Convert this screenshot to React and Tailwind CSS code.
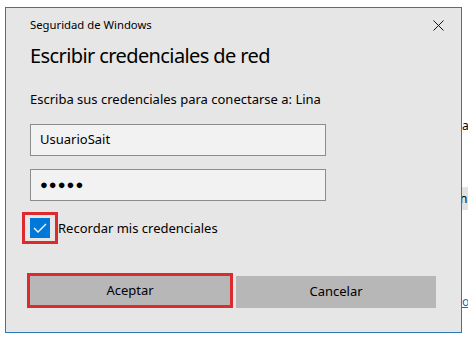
export default function App() {
  return (
    <div className="w-[468px] h-[340px] bg-white overflow-hidden flex items-start font-['Noto_Sans',sans-serif] text-black">
      {/* dialog */}
      <div className="ml-[5px] mt-[7px] w-[457px] h-[326px] shrink-0 border border-[#2b79b5] bg-[#e6e6e6] flex flex-col pl-[24px]">
        <div className="mt-[8px] h-[17px] flex items-center justify-between pr-[17px]">
          <span className="text-[11.3px] leading-[17px]">Seguridad de Windows</span>
          <svg width="11" height="11" viewBox="0 0 11 11" className="mt-[1px]">
            <path d="M0.5 0.5L10.5 10.5M10.5 0.5L0.5 10.5" stroke="#111" strokeWidth="1" />
          </svg>
        </div>

        <h1 className="mt-[9px] text-[20px] leading-[28px] tracking-[-0.6px]">Escribir credenciales de red</h1>

        <p className="mt-[21px] text-[13px] leading-[16px]">Escriba sus credenciales para conectarse a: Lina</p>

        <div className="mt-[17px] w-[296px] h-[32px] border border-[#8c8c8c] bg-[#f2f2f2] flex items-center px-[9px] text-[13px]">
          UsuarioSait
        </div>
        <div className="mt-[13px] w-[296px] h-[32px] border border-[#8c8c8c] bg-[#f2f2f2] flex items-center px-[9px] text-[13px] tracking-[1px]">
          ●●●●●
        </div>

        <div className="mt-[11px] -ml-[8px] flex items-center">
          <div className="border-[3px] border-[#dc2a2f] px-[5px] py-[3px]">
            <div className="w-[20px] h-[20px] bg-[#0078d7] flex items-center justify-center">
              <svg width="14" height="10" viewBox="0 0 14 10">
                <path d="M1 5L5 9L13 1" fill="none" stroke="white" strokeWidth="1.3" />
              </svg>
            </div>
          </div>
          <span className="text-[13px] leading-[18px]">Recordar mis credenciales</span>
        </div>

        <div className="mt-[29px] -ml-[3px] flex items-end gap-[3px]">
          <button className="w-[206px] h-[35px] border-[3px] border-[#dc2a2f] bg-[#b7b7b7] text-[13px] flex items-center justify-center">
            Aceptar
          </button>
          <button className="w-[200px] h-[32px] bg-[#b7b7b7] text-[13px] flex items-center justify-center">
            Cancelar
          </button>
        </div>
      </div>

      {/* page behind the dialog */}
      <div className="w-[6px] shrink-0 overflow-hidden flex flex-col text-[12px] leading-[16px] whitespace-nowrap">
        <span className="mt-[118px]">ar</span>
        <div className="mt-[53px] h-[23px] bg-[#e2e2e2] flex items-center">
          <span className="-ml-[2px]">na</span>
        </div>
        <span className="mt-[84px] text-[#1a66b3] underline">o</span>
      </div>
    </div>
  );
}
